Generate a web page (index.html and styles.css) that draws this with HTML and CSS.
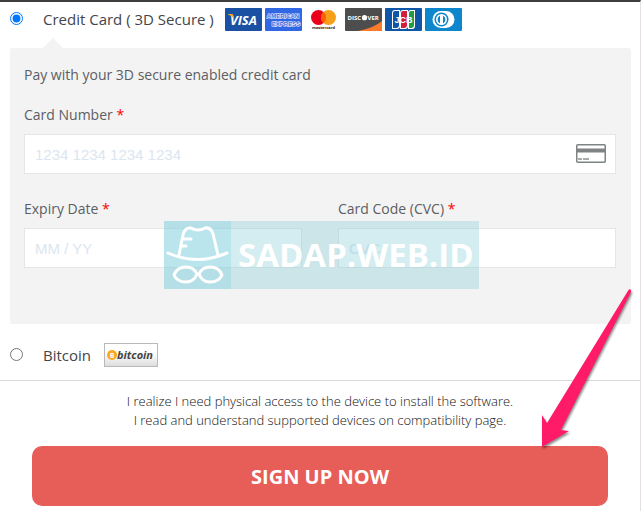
FILE: index.html
```html
<!DOCTYPE html>
<html lang="en">
<head>
<meta charset="utf-8">
<meta name="viewport" content="width=device-width, initial-scale=1">
<title>Checkout</title>
<link rel="stylesheet" href="styles.css">
</head>
<body>
<form class="checkout">
  <div class="method">
    <input class="method-radio" type="radio" name="method" id="card" checked>
    <label class="method-label" for="card">Credit Card ( 3D Secure )</label>
    <div class="brands">
      <svg class="brand" viewBox="0 0 37 23" role="img" aria-label="Visa"><rect width="37" height="23" rx="1" fill="#1a51a3"/><text x="5" y="17" class="visa" fill="#fff">VISA</text><path d="M3 6h4q1 0 1.300 1l1 4Q7 7.500 3 6.500z" fill="#f7a823"/></svg>
      <svg class="brand" viewBox="0 0 37 23" role="img" aria-label="American Express"><rect width="37" height="23" rx="1" fill="#3167e3"/><text x="18" y="10" text-anchor="middle" class="amex" fill="#3167e3" stroke="#fff">AMERICAN</text><text x="21" y="18" text-anchor="middle" class="amex" fill="#3167e3" stroke="#fff">EXPRESS</text></svg>
      <svg class="brand" viewBox="0 0 37 23" role="img" aria-label="Mastercard"><circle cx="13.500" cy="9.500" r="7.500" fill="#eb001b"/><circle cx="23.500" cy="9.500" r="7.500" fill="#f79e1b"/><path d="M18.500 3.900a7.500 7.500 0 0 1 0 11.200a7.500 7.500 0 0 1 0-11.200" fill="#ff5f00"/><text x="18.500" y="21" text-anchor="middle" class="master" fill="#222">mastercard</text></svg>
      <svg class="brand" viewBox="0 0 37 23" role="img" aria-label="Discover"><rect width="37" height="23" rx="1" fill="#4d4d4d"/><path d="M37 13v9q0 1-1 1H13Q29 20 37 13" fill="#fc7a2a"/><text x="2.500" y="12" class="discover" fill="#fff">DISC</text><circle cx="19.500" cy="9.700" r="2.600" fill="#fff"/><text x="22.500" y="12" class="discover" fill="#fff">VER</text></svg>
      <svg class="brand" viewBox="0 0 37 23" role="img" aria-label="JCB"><rect width="37" height="23" rx="1" fill="#0f56a6"/><path d="M10 2h5v16q0 3-3 3H7V5q0-3 3-3M18 2h5v16q0 3-3 3h-5V5q0-3 3-3M26 2h4v16q0 3-3 3h-4V5q0-3 3-3" fill="#fff"/><path d="M10 3h4v14q0 3-3 3H8V5q0-2 2-2" fill="#0f56a6"/><path d="M18 3h4v14q0 3-3 3h-3V5q0-2 2-2" fill="#d21e3c"/><path d="M26 3h3v14q0 3-3 3h-2V5q0-2 2-2" fill="#249b3e"/><text x="18.500" y="15" text-anchor="middle" class="jcb" fill="#fff">JCB</text></svg>
      <svg class="brand" viewBox="0 0 37 23" role="img" aria-label="Diners Club"><rect width="37" height="23" rx="1" fill="#0e86cb"/><path d="M16 3h5a8.500 8.500 0 0 1 0 17h-5a8.500 8.500 0 0 1 0-17" fill="#fff"/><circle cx="16.500" cy="11.500" r="7" fill="#0e86cb"/><circle cx="16.500" cy="11.500" r="5.500" fill="#fff"/><path d="M15 7.500v8a4.500 4.500 0 0 1 0-8M18 7.500v8a4.500 4.500 0 0 0 0-8" fill="#0e86cb"/></svg>
    </div>
  </div>

  <section class="panel">
    <p class="panel-intro">Pay with your 3D secure enabled credit card</p>
    <div class="field">
      <label for="number">Card Number <span class="required">*</span></label>
      <div class="input-box">
        <input class="text-input" id="number" type="text" placeholder="1234 1234 1234 1234">
        <svg class="card-icon" viewBox="0 0 30 19" aria-hidden="true"><rect x=".75" y=".75" width="28.500" height="17.500" rx="1" fill="#fff" stroke="#7e8383" stroke-width="1.500"/><path d="M1 4.500h28v4H1z" fill="#7e8383"/><path d="M2 15h4M7 15h6" stroke="#a5aaaa" stroke-width="2"/></svg>
      </div>
    </div>
    <div class="field-row">
      <div class="field">
        <label for="expiry">Expiry Date <span class="required">*</span></label>
        <input class="text-input" id="expiry" type="text" placeholder="MM / YY">
      </div>
      <div class="field">
        <label for="cvc">Card Code (CVC) <span class="required">*</span></label>
        <input class="text-input" id="cvc" type="text" placeholder="CVC">
      </div>
    </div>
    <div class="watermark">
      <div class="watermark-logo">
        <svg class="spy" viewBox="0 0 67 68" aria-hidden="true"><g fill="none" stroke="#fff" stroke-width="3" stroke-linecap="round" stroke-linejoin="round"><path d="M4 32q29 13 59 0M15 34l4-20q2-8 8-7 7 4 14 0 6-1 8 6l5 21M18 18h9M17 25h5"/><path d="M10 54q3-8 12-8 8 0 11 7-3 8-11 8-9 0-12-7zM35 53q3-7 11-7 9 0 12 8-3 7-12 7-8 0-11-8z"/></g></svg>
      </div>
      <span class="watermark-text">SADAP.WEB.ID</span>
    </div>
  </section>

  <div class="method">
    <input class="method-radio" type="radio" name="method" id="bitcoin">
    <label class="method-label" for="bitcoin">Bitcoin</label>
    <svg class="bitcoin-logo" viewBox="0 0 54 24" role="img" aria-label="Bitcoin">
      <defs><linearGradient id="shade" x2="0" y2="1"><stop offset=".4" stop-color="#fff"/><stop offset="1" stop-color="#dcdcdc"/></linearGradient></defs>
      <rect x=".5" y=".5" width="53" height="23" fill="url(#shade)" stroke="#b9b9b9"/>
      <circle cx="8" cy="12" r="5" fill="#fba919"/><text x="8" y="15" text-anchor="middle" class="coin" fill="#fff">B</text>
      <text x="13" y="16" class="bitcoin-word" fill="#444">bitcoin</text>
    </svg>
  </div>

  <footer class="confirm">
    <p class="terms">I realize I need physical access to the device to install the software.<br>I read and understand supported devices on compatibility page.</p>
    <button class="submit" type="submit">SIGN UP NOW</button>
    <svg class="arrow" viewBox="0 0 100 170" aria-hidden="true"><path d="M90.500 9q1.500-1.500 2.500 0v2L23 149l8 1L4 166V134l5 8z" fill="#ff1b67"/></svg>
  </footer>
</form>
</body>
</html>
```
FILE: styles.css
```css
* {
  box-sizing: border-box;
}

body {
  margin: 0;
  background: #fff;
  color: #43454b;
  font-family: "Open Sans", "Noto Sans", sans-serif;
  font-size: 15px;
  line-height: 20px;
}

p {
  margin: 0;
}

.checkout {
  margin-right: 2px;
  border-top: 2px solid #3f3d3f;
  border-right: 1px solid #e6dfe2;
}

.method {
  display: flex;
  align-items: center;
  height: 34px;
  padding: 0 10px;
}

.method-radio {
  width: 13px;
  height: 13px;
  margin: 0 20px 2px 0;
}

.method-label {
  margin-right: 11px;
}

.brands {
  display: flex;
  gap: 3px;
}

.brand {
  width: 37px;
  height: 23px;
}

.visa {
  font: italic bold 13px "Open Sans", sans-serif;
}

.amex {
  font: bold 6px "Liberation Sans", sans-serif;
  stroke-width: 1px;
  paint-order: stroke;
}

.master {
  font: bold 4px "Open Sans", sans-serif;
}

.discover {
  font: bold 6px "Open Sans", sans-serif;
}

.jcb {
  font: bold 9px "Liberation Sans", sans-serif;
}

.panel {
  position: relative;
  margin: 12px 9px 14px 10px;
  padding: 17px 15px 56px 14px;
  border-radius: 3px;
  background: #f3f3f3;
  color: #5c5e63;
  font-size: 14px;
}

.panel::before {
  content: "";
  position: absolute;
  left: 33px;
  bottom: 100%;
  border: 10px solid transparent;
  border-top: 0;
  border-bottom-color: #f3f3f3;
}

.panel-intro {
  margin-bottom: 20px;
}

.field {
  display: flex;
  flex-direction: column;
  gap: 9px;
}

.field-row {
  display: grid;
  grid-template-columns: 1fr 1fr;
  gap: 36px;
  margin-top: 25px;
}

.required {
  color: #f00;
}

.input-box {
  position: relative;
}

.text-input {
  display: block;
  width: 100%;
  height: 40px;
  padding: 0 10px;
  border: 1px solid #e6e6e6;
  border-radius: 0;
  background: #fff;
  font: 15px "Liberation Sans", sans-serif;
}

.text-input::placeholder {
  color: #dce6f0;
}

.card-icon {
  position: absolute;
  top: 10px;
  right: 10px;
  width: 30px;
  height: 19px;
}

.watermark {
  position: absolute;
  left: 154px;
  bottom: 35px;
  display: flex;
  align-items: center;
  width: 315px;
  height: 68px;
  background: rgb(121 200 212 / 33%);
  pointer-events: none;
}

.watermark-logo {
  width: 67px;
  height: 68px;
  background: rgb(110 205 220 / 23%);
}

.spy {
  display: block;
}

.watermark-text {
  padding-left: 7px;
  color: #fff;
  font-size: 33px;
  font-weight: 700;
  line-height: 40px;
}

.bitcoin-logo {
  width: 54px;
  height: 24px;
  margin-left: 2px;
}

.coin {
  font: bold 7px "Open Sans", sans-serif;
}

.bitcoin-word {
  font: italic bold 11px "Open Sans", sans-serif;
}

.confirm {
  position: relative;
  margin-top: 8px;
  padding: 11px 32px 5px;
  border-top: 1px solid #ddd8da;
  text-align: center;
}

.terms {
  margin-bottom: 16px;
  color: #111;
  font-size: 13px;
  font-weight: 300;
  line-height: 19px;
}

.submit {
  display: block;
  width: 100%;
  height: 60px;
  border: 0;
  border-radius: 10px;
  background: #e75d58;
  color: #fff;
  font: bold 20px "Open Sans", sans-serif;
}

.arrow {
  position: absolute;
  right: 2px;
  bottom: 60px;
  width: 100px;
  height: 170px;
  filter: drop-shadow(1px 2px 1px rgb(0 0 0 / 45%));
  pointer-events: none;
}
```
